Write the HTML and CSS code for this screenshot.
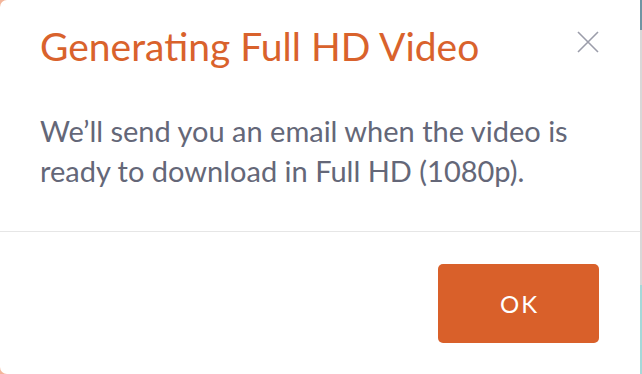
FILE: index.html
```html
<!DOCTYPE html>
<html>
<head>
<meta charset="utf-8">
<link rel="stylesheet" href="styles.css">
</head>
<body>
<div class="page">
  <div class="modal">
    <div class="modal-header">
      <h1 class="modal-title">Generating Full HD Video</h1>
      <button class="close-btn" aria-label="Close">
        <svg width="22" height="22" viewBox="0 0 22 22"><path d="M1 1L21 21M21 1L1 21" stroke="#9b9daa" stroke-width="1.6" fill="none"/></svg>
      </button>
    </div>
    <div class="modal-body">
      <p>We’ll send you an email when the video is ready to download in Full HD (1080p).</p>
    </div>
    <div class="modal-footer">
      <button class="ok-btn">OK</button>
    </div>
  </div>
  <div class="edge"></div>
</div>
</body>
</html>
```
FILE: styles.css
```css
html, body {
  margin: 0;
  padding: 0;
  width: 642px;
  height: 374px;
  overflow: hidden;
  background: #f3b59a;
}
.page {
  display: flex;
  width: 642px;
  height: 374px;
}
.modal {
  width: 640px;
  height: 374px;
  background: #ffffff;
  border-radius: 7px 0 0 7px;
  font-family: "Lato", "Open Sans", sans-serif;
  display: flex;
  flex-direction: column;
}
.edge {
  width: 2px;
  height: 374px;
  background: linear-gradient(#6f95a3 0, #6f95a3 30px, #d8d8d8 30px, #d8d8d8 285px, #a5d9d9 285px);
}
.modal-header {
  display: flex;
  justify-content: space-between;
  align-items: flex-start;
  padding: 23px 41px 0 40px;
  height: 69px;
  box-sizing: border-box;
}
.modal-title {
  margin: 0;
  font-size: 39px;
  font-weight: 400;
  line-height: 46px;
  color: #d9622c;
}
.close-btn {
  border: 0;
  background: none;
  padding: 0;
  margin-top: 8px;
  width: 22px;
  height: 22px;
  display: block;
}
.close-btn svg { display: block; }
.modal-body {
  padding: 42px 40px 0 40px;
  height: 162px;
  box-sizing: border-box;
}
.modal-body p {
  margin: 0;
  font-size: 29px;
  line-height: 40px;
  color: #646778;
}
.modal-footer {
  border-top: 1px solid #e6e6e6;
  display: flex;
  justify-content: flex-end;
  padding: 32px 41px 0 0;
}
.ok-btn {
  width: 161px;
  height: 79px;
  background: #d9602a;
  border: 0;
  border-radius: 5px;
  color: #ffffff;
  font-family: "Lato", sans-serif;
  font-size: 24px;
  font-weight: 400;
  letter-spacing: 2px;
  padding: 0 0 0 2px;
}
```
